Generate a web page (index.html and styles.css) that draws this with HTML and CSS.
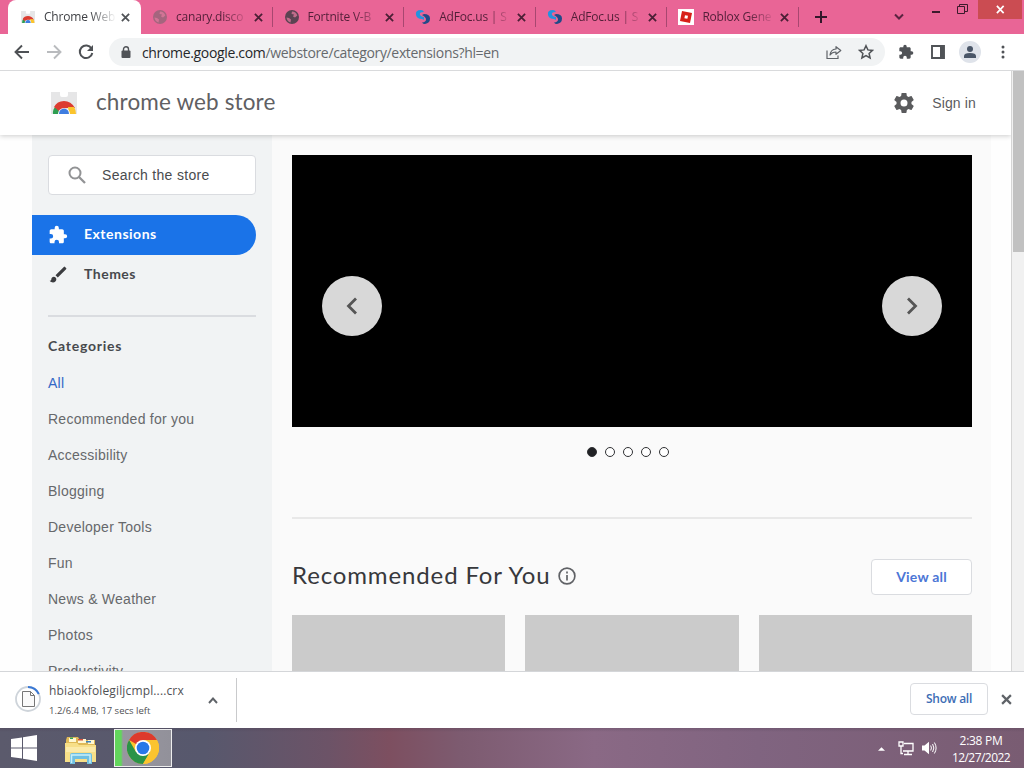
FILE: index.html
```html
<!DOCTYPE html>
<html lang="en">
<head>
<meta charset="utf-8">
<title>Chrome Web Store - Extensions</title>
<link rel="stylesheet" href="styles.css">
</head>
<body>
<svg class="defs" aria-hidden="true">
  <symbol id="x" viewBox="0 0 10 10"><path d="M1 1l8 8M9 1L1 9" fill="none" stroke="currentColor" stroke-width="2"/></symbol>
  <symbol id="globe" viewBox="0 0 14 14"><circle cx="7" cy="7" r="7" fill="currentColor"/><path d="M1.500 7.500L4 8l2 1.500-.5 3Q2 11.500 1.500 7.500zM7 1.500q4 0 5.300 4L10 7.500 8 6.500 9 4.500 6.500 4z" fill="#e07a9e" opacity=".75"/></symbol>
  <symbol id="adfocus" viewBox="0 0 16 16"><path d="M6 1Q0 1 1 6q1 4 6 4l2 1V8Q4 7 5 4q1-1 4-1Q8 1 6 1z" fill="#2493df"/><path d="M9 5q6 0 6 4.500Q15 14 10 15q-2 0-3-1.500 4-.5 4-3Q11 8 7 6z" fill="#214a88"/></symbol>
  <symbol id="store" viewBox="0 0 26 22"><path d="M0 0h9v3q0 2 2 2h4q2 0 2-2V0h9v22H0z" fill="#e6e6e7"/><path d="M2 22q-.5-5 3-8l5 8z" fill="#2f9e51"/><path d="M3 15Q6 9 13 9t11 7h-8l-8 3z" fill="#dc3c31"/><path d="M17 15h6q2 3 2 7h-7z" fill="#fbc42d"/><path d="M7 22a6 6 0 0 1 12 0z" fill="#fff"/><path d="M8 22a5 5.500 0 0 1 10 0z" fill="#3f7de0"/></symbol>
  <symbol id="puzzle" viewBox="0 0 24 24"><path fill="currentColor" d="M20.500 11H19V7c0-1.100-.9-2-2-2h-4V3.500a2.500 2.500 0 0 0-5 0V5H4c-1.100 0-2 .9-2 2v3.800h1.500a2.700 2.700 0 0 1 0 5.400H2V20c0 1.100.9 2 2 2h3.800v-1.500a2.700 2.700 0 0 1 5.400 0V22H17c1.100 0 2-.9 2-2v-4h1.500a2.500 2.500 0 0 0 0-5z"/></symbol>
</svg>

<header class="tabstrip">
  <div class="tabs">
    <div class="tab active"><svg class="fav"><use href="#store"/></svg><span class="title">Chrome Web</span><svg class="close"><use href="#x"/></svg></div>
    <div class="tab"><svg class="fav dim"><use href="#globe"/></svg><span class="title">canary.disco</span><svg class="close"><use href="#x"/></svg></div>
    <div class="tab"><svg class="fav dark"><use href="#globe"/></svg><span class="title">Fortnite V-B</span><svg class="close"><use href="#x"/></svg></div>
    <div class="tab"><svg class="fav big"><use href="#adfocus"/></svg><span class="title">AdFoc.us | S</span><svg class="close"><use href="#x"/></svg></div>
    <div class="tab"><svg class="fav big"><use href="#adfocus"/></svg><span class="title">AdFoc.us | S</span><svg class="close"><use href="#x"/></svg></div>
    <div class="tab"><svg class="fav big" viewBox="0 0 16 16"><path d="M0 0h16v16H0z" fill="#fff"/><path d="M4 2l10 2-2 10L2 12z" fill="#d71f18"/><path d="M7 6.200l3 .6-.6 3-3-.6z" fill="#fff"/></svg><span class="title">Roblox Gene</span><svg class="close"><use href="#x"/></svg></div>
  </div>
  <svg class="newtab" viewBox="0 0 12 12"><path d="M6 0v12M0 6h12" stroke="#33172a" stroke-width="2"/></svg>
  <div class="winctl">
    <svg class="chev" viewBox="0 0 10 6"><path d="M1 1l4 4 4-4" fill="none" stroke="#5a2440" stroke-width="2"/></svg>
    <span class="min"></span>
    <svg class="restore" viewBox="0 0 11 10"><path d="M.5 2.500h7v7h-7zM2.500 2.500v-2h8v7h-3" fill="none" stroke="#3c1a2c"/></svg>
    <span class="closewin"><svg viewBox="0 0 10 10"><path d="M1 1l7.500 8M8.500 1L1 9" stroke="#fff" stroke-width="1.900"/></svg></span>
  </div>
</header>

<nav class="toolbar">
  <svg class="nav" viewBox="0 0 16 16"><path d="M15 8H2M8 1.500L1.500 8 8 14.500" fill="none" stroke="#4e5155" stroke-width="1.900"/></svg>
  <svg class="nav" viewBox="0 0 16 16"><path d="M1 8h13M8 1.500L14.500 8 8 14.500" fill="none" stroke="#b9bbbe" stroke-width="1.900"/></svg>
  <svg class="nav" viewBox="0 0 16 16"><path d="M13.500 4.500A6.300 6.300 0 1 0 14.300 9" fill="none" stroke="#4e5155" stroke-width="2"/><path d="M15 1v6H9z" fill="#4e5155"/></svg>
  <div class="omnibox">
    <svg class="lock" viewBox="0 0 10 12"><path d="M2.500 5V3.300a2.500 2.500 0 0 1 5 0V5" fill="none" stroke="#505357" stroke-width="1.400"/><rect x=".5" y="4.500" width="9" height="7.500" rx="1" fill="#505357"/></svg>
    <span class="url"><b>chrome.google.com</b>/webstore/category/extensions?hl=en</span>
    <svg class="share" viewBox="0 0 16 14"><path d="M1 5v8h11v-3" fill="none" stroke="#5f6368" stroke-width="1.200"/><path d="M10 1.200L14.800 5 10 8.800V6.500Q6 6.500 4 9.500 4.500 4 10 3.500z" fill="none" stroke="#5f6368" stroke-width="1.200" stroke-linejoin="round"/></svg>
    <svg class="star" viewBox="0 0 16 16"><path d="M8 1.700l1.900 4.200 4.600.5-3.400 3 1 4.600L8 11.600 3.900 14l1-4.600-3.400-3 4.600-.5z" fill="none" stroke="#505357" stroke-width="1.500"/></svg>
  </div>
  <svg class="ext"><use href="#puzzle"/></svg>
  <svg class="side" viewBox="0 0 14 14"><path d="M1 1h12v12H1z" fill="none" stroke="#505357" stroke-width="1.900"/><path d="M9 1h4v12H9z" fill="#505357"/></svg>
  <span class="avatar"><svg viewBox="0 0 12 12"><circle cx="6" cy="3" r="3" fill="#4a5668"/><path d="M0 12V10q0-3 6-3t6 3v2z" fill="#4a5668"/></svg></span>
  <svg class="kebab" viewBox="0 0 4 14"><g fill="#505357"><circle cx="2" cy="2" r="1.500"/><circle cx="2" cy="7" r="1.500"/><circle cx="2" cy="12" r="1.500"/></g></svg>
</nav>

<div class="viewport">
  <div class="page">
    <header class="storehead">
      <svg class="logo"><use href="#store"/></svg>
      <h1>chrome web store</h1>
      <svg class="gear" viewBox="2 2 20 20"><path fill="#5a5b5d" d="M19.430 12.980c.04-.32.07-.64.07-.98s-.03-.66-.07-.98l2.110-1.650c.19-.15.24-.42.12-.64l-2-3.460c-.12-.22-.39-.3-.61-.22l-2.490 1c-.52-.4-1.080-.73-1.690-.98l-.38-2.650C14.460 2.180 14.250 2 14 2h-4c-.25 0-.46.18-.49.42l-.38 2.650c-.61.25-1.170.59-1.690.98l-2.490-1c-.23-.09-.49 0-.61.22l-2 3.460c-.13.22-.07.49.12.64l2.110 1.650c-.04.32-.07.65-.07.98s.03.66.07.98l-2.110 1.650c-.19.15-.24.42-.12.64l2 3.460c.12.22.39.3.61.22l2.490-1c.52.4 1.080.73 1.690.98l.38 2.650c.03.24.24.42.49.42h4c.25 0 .46-.18.49-.42l.38-2.650c.61-.25 1.170-.59 1.690-.98l2.490 1c.23.09.49 0 .61-.22l2-3.460c.12-.22.07-.49-.12-.64zM12 15.500a3.500 3.500 0 1 1 0-7 3.500 3.500 0 0 1 0 7z"/></svg>
      <a class="signin">Sign in</a>
    </header>
    <div class="content">
      <aside class="sidebar">
        <div class="search"><svg viewBox="0 0 18 18"><circle cx="7" cy="7" r="5.500" fill="none" stroke="#929395" stroke-width="2"/><path d="M11 11l6 6" stroke="#929395" stroke-width="2.300"/></svg><span>Search the store</span></div>
        <div class="navitem on"><svg><use href="#puzzle"/></svg><span>Extensions</span></div>
        <div class="navitem"><svg viewBox="0 0 24 24"><path fill="#3b3c3f" d="M7 14c-1.660 0-3 1.340-3 3 0 1.310-1.160 2-2 2 .92 1.220 2.490 2 4 2 2.210 0 4-1.790 4-4 0-1.660-1.340-3-3-3zm14.700-10.400l-1.300-1.300a1 1 0 0 0-1.410 0L9 12.250 11.750 15l9.950-9.950a1 1 0 0 0 0-1.450z"/></svg><span>Themes</span></div>
        <hr>
        <h2>Categories</h2>
        <ul>
          <li class="sel">All</li><li>Recommended for you</li><li>Accessibility</li><li>Blogging</li><li>Developer Tools</li><li>Fun</li><li>News &amp; Weather</li><li>Photos</li><li>Productivity</li>
        </ul>
      </aside>
      <main class="main">
        <section class="carousel">
          <span class="arrow"><svg viewBox="0 0 12 18"><path d="M10 1.500L2.500 9l7.500 7.500" fill="none" stroke="#555" stroke-width="2.800"/></svg></span>
          <span class="arrow"><svg viewBox="0 0 12 18"><path d="M2 1.500L9.500 9 2 16.500" fill="none" stroke="#555" stroke-width="2.800"/></svg></span>
        </section>
        <div class="dots"><i class="full"></i><i></i><i></i><i></i><i></i></div>
        <hr>
        <div class="sectionhead"><h2>Recommended For You</h2><svg viewBox="0 0 16 16"><circle cx="8" cy="8" r="7" fill="none" stroke="#606266" stroke-width="1.500"/><path d="M8 7v5M8 4v1.700" stroke="#606266" stroke-width="1.500"/></svg><a class="viewall">View all</a></div>
        <div class="cards"><div></div><div></div><div></div></div>
      </main>
    </div>
  </div>
  <div class="scrollbar"><div class="thumb"></div></div>
</div>

<div class="shelf">
  <svg class="dl" viewBox="0 0 28 28"><circle cx="14" cy="14" r="12" fill="none" stroke="#ced4da" stroke-width="1.800"/><path d="M14 2a12 12 0 0 1 10.800 7" fill="none" stroke="#3978d5" stroke-width="2"/><path d="M8.500 6.500h8l4 4v11h-12z" fill="#fafafa" stroke="#777"/><path d="M16.500 6.500v4h4" fill="none" stroke="#777"/></svg>
  <div class="file"><span class="fname">hbiaokfolegiljcmpl....crx</span><span class="fstat">1.2/6.4 MB, 17 secs left</span></div>
  <svg class="up" viewBox="0 0 10 7"><path d="M1 6l4-4.500L9 6" fill="none" stroke="#5f6368" stroke-width="1.900"/></svg>
  <span class="rule"></span>
  <a class="showall">Show all</a>
  <svg class="shelfx"><use href="#x"/></svg>
</div>

<footer class="taskbar">
  <svg class="win" viewBox="0 0 26 26"><path fill="#fff" d="M0 4l11-1.500v10H0zM12 2.300L26 0v12.500H12zM0 13.500h11v10L0 22zM12 13.500h14V26l-14-2.200z"/></svg>
  <svg class="folder" viewBox="0 0 34 30"><path d="M3 2h11l2 3h15v22H2V5z" fill="#dfb957"/><path d="M5 3h7v4H5zM14 4h8v4h-8zM24 5h6v4h-6z" fill="#fff8d2"/><path d="M6 2.500h3v1.500H6z" fill="#35a35b"/><path d="M14 4h5v1.500h-5z" fill="#d75039"/><path d="M22 6h5v1.500h-5z" fill="#3c83bf"/><path d="M1 8h12l2 2h17v17H1z" fill="#f7df88"/><path d="M2 12h29v5H2z" fill="#fbeaa9"/><path d="M6 29V20q0-2 2-2h18q2 0 2 2v9h-5v-5H11v5H6z" fill="#6fc0e2"/><path d="M7.500 28v-8h18.500v8" fill="none" stroke="#c7effb" stroke-width="1.500"/></svg>
  <div class="task"><svg viewBox="0 0 32 32"><circle cx="16" cy="16" r="16" fill="#fbc42f"/><path d="M16 16L2.100 8A16 16 0 0 1 29.900 8H16z" fill="#dd3a2d"/><path d="M2.100 8a16 16 0 0 0 13.900 24l7-12-7-4-7 4z" fill="#2a9347"/><path d="M16 8h13.900A16 16 0 0 1 16 32l7-12z" fill="#fbc42f"/><circle cx="16" cy="16" r="8" fill="#fff"/><circle cx="16" cy="16" r="6.300" fill="#2878e8"/></svg></div>
  <div class="tray">
    <svg class="tri" viewBox="0 0 8 4"><path d="M4 0l4 4H0z" fill="#fff"/></svg>
    <svg class="net" viewBox="0 0 16 15"><g fill="none" stroke="#fff" stroke-width="1.300"><path d="M6 2.500h9v7.500H5M10 10v3M6 13.500h8M1 1h4v4H1zM3 5v7.500h2"/></g></svg>
    <svg class="vol" viewBox="0 0 16 14"><path d="M1 4.500h2.500L8 .8v12.400L3.500 9.500H1z" fill="#fff"/><path d="M9.700 4.500q1.500 2.500 0 5M11.600 3q2.500 4 0 8M13.400 1.500q3.400 5.500 0 11" fill="none" stroke="#fff"/></svg>
    <div class="clock"><span class="time">2:38 PM</span><span class="date">12/27/2022</span></div>
  </div>
</footer>
</body>
</html>
```
FILE: styles.css
```css
* { box-sizing: border-box; }
body { margin: 0; width: 1024px; height: 768px; overflow: hidden; display: flex; flex-direction: column; background: #fff; font-family: "Open Sans", "Noto Sans", sans-serif; }
svg { display: block; flex: none; }
.defs { position: absolute; width: 0; height: 0; }
h1, h2, ul, hr { margin: 0; padding: 0; border: 0; font-weight: 400; }

.tabstrip { flex: 0 0 34px; display: flex; background: #e96596; padding-left: 8px; }
.tabs { display: flex; width: 791px; }
.tab { flex: 1 1 0; min-width: 0; display: flex; align-items: center; padding: 0 10px 0 12px; color: #521f38; background: linear-gradient(#a84770, #a84770) right 7px / 1px 20px no-repeat; }
.tab.active { background: #fff; border-radius: 8px 8px 0 0; color: #3f4145; flex: 0 0 133px; padding: 0 11px 0 13px; }
.tab .fav { width: 14px; height: 14px; margin: 0 9px 0 0; }
.tab .fav.big { width: 16px; height: 16px; margin: 0 8px 0 -1px; }
.fav.dim { color: #a5657e; }
.fav.dark { color: #5b4352; }
.title { flex: 1; min-width: 0; white-space: nowrap; font-size: 12px; line-height: 18px; letter-spacing: -.2px; -webkit-mask-image: linear-gradient(90deg, #000 65%, transparent 102%); mask-image: linear-gradient(90deg, #000 65%, transparent 102%); }
.close { width: 9px; height: 9px; margin-left: 6px; color: #4b1f35; }
.active .close { color: #505357; }
.newtab { width: 12px; height: 12px; margin: 11px 0 0 16px; }
.winctl { margin-left: auto; display: flex; align-items: flex-start; }
.chev { width: 10px; height: 7px; margin: 13px 33px 0 0; }
.min { width: 8px; height: 2px; background: #3c1a2c; margin: 11px 17px 0 -5px; }
.restore { width: 11px; height: 10px; margin: 4px 10px 0 0; }
.closewin { width: 44px; height: 19px; background: #cb4c52; margin-right: 2px; display: grid; place-items: center; }
.closewin svg { width: 9px; height: 9px; }

.toolbar { flex: 0 0 37px; display: flex; align-items: center; padding: 0 19px 0 14px; border-bottom: 1px solid #d9dadc; background: #fff; }
.nav { width: 16px; height: 16px; margin-right: 16px; }
.omnibox { width: 776px; height: 28px; border-radius: 14px; background: #f1f3f4; margin-left: -1px; display: flex; align-items: center; padding: 0 11px 0 12px; }
.lock { width: 10px; height: 12px; }
.url { margin-left: 11px; font-size: 14px; letter-spacing: -.34px; color: #66696d; white-space: nowrap; }
.url b { font-weight: 400; color: #25272a; }
.share { width: 16px; height: 15px; margin-left: auto; }
.star { width: 16px; height: 16px; margin: 0 0 0 16px; }
.ext { width: 16px; height: 16px; color: #505357; margin-left: 13px; }
.side { width: 14px; height: 14px; margin-left: 17px; }
.avatar { width: 22px; height: 22px; border-radius: 50%; background: #dfe3ea; display: grid; place-items: center; margin-left: 14px; }
.avatar svg { width: 12px; height: 12px; }
.kebab { width: 4px; height: 14px; margin-left: auto; }

.viewport { flex: 0 0 600px; display: flex; overflow: hidden; }
.page { width: 1011px; overflow: hidden; background: #fefefe; }
.storehead { height: 64px; background: #fff; display: flex; align-items: center; padding: 0 35px 0 51px; box-shadow: 0 1px 5px rgba(0,0,0,.2); position: relative; }
.logo { width: 26px; height: 22px; }
.storehead h1 { margin: 0 0 2px 19px; font: 22.500px/28px Lato, sans-serif; color: #5f6063; letter-spacing: .13px; white-space: nowrap; }
.gear { width: 20px; height: 20px; margin-left: auto; }
.signin { margin-left: 18px; font: 14px/20px "Liberation Sans", sans-serif; letter-spacing: .15px; color: #5a5b5e; }
.content { display: flex; margin: 0 20px 0 32px; height: 536px; background: #fafafa; }
.sidebar { width: 240px; background: #f1f3f4; padding: 20px 16px 0 0; overflow: hidden; }
.search { margin-left: 16px; height: 40px; border: 1px solid #dadce0; border-radius: 4px; background: #fff; display: flex; align-items: center; padding-left: 19px; font: 14px/20px "Liberation Sans", sans-serif; letter-spacing: .3px; color: #4a4b4e; margin-bottom: 20px; }
.search svg { width: 18px; height: 18px; margin-right: 16px; }
.navitem { height: 40px; border-radius: 0 20px 20px 0; display: flex; align-items: center; padding-left: 16px; font: 700 14px/20px Lato, sans-serif; letter-spacing: .5px; color: #47494d; }
.navitem svg { width: 20px; height: 20px; margin-right: 16px; }
.navitem span { padding-bottom: 2px; }
.navitem:not(.on) svg { width: 20px; height: 20px; }
.navitem.on { background: #1a73e8; color: #fff; }
.sidebar hr { height: 2px; background: #dadce0; margin: 20px 0 0 16px; }
.sidebar h2 { margin: 19px 0 9px 16px; font: 700 14px/20px Lato, sans-serif; letter-spacing: .75px; color: #47494d; }
.sidebar ul { list-style: none; margin-left: 16px; font: 14px/36px "Liberation Sans", sans-serif; letter-spacing: .25px; color: #66686b; }
.sidebar li { height: 36px; }
.sel { color: #3367c6; }
.main { width: 700px; padding: 20px 0 0 20px; }
.carousel { height: 272px; width: 680px; background: #000; display: flex; justify-content: space-between; align-items: center; padding: 30px 30px 0; }
.arrow { width: 60px; height: 60px; border-radius: 50%; background: #d8d8d8; display: grid; place-items: center; }
.arrow svg { width: 12px; height: 18px; }
.dots { display: flex; justify-content: center; gap: 8px; margin-top: 20px; width: 672px; }
.dots i { width: 10px; height: 10px; border: 1px solid #303134; border-radius: 50%; background: #fff; }
.dots .full { background: #202124; }
.main hr { width: 680px; height: 2px; background: #e8e8e8; margin-top: 60px; }
.sectionhead { display: flex; align-items: center; width: 680px; height: 36px; margin: 40px 0 20px; }
.sectionhead h2 { font: 24px/32px Lato, sans-serif; letter-spacing: .87px; padding-bottom: 4px; color: #37383c; white-space: nowrap; }
.sectionhead svg { width: 18px; height: 18px; margin: -3px 0 0 8px; }
.viewall { margin-left: auto; width: 101px; height: 36px; border: 1px solid #dadce0; border-radius: 4px; background: #fff; text-align: center; font: 700 14px/34px Lato, sans-serif; letter-spacing: .2px; color: #4c76d6; }
.cards { display: grid; grid-template-columns: repeat(3, 1fr); gap: 20px; width: 680px; height: 60px; }
.cards div { background: #cbcbcb; }
.scrollbar { width: 13px; background: #f1f1f1; border-left: 1px solid #d5d5d5; }
.thumb { height: 181px; width: 11px; margin-left: 1px; background: #c1c1c1; }

.shelf { flex: 0 0 57px; display: flex; align-items: center; border-top: 1px solid #d4d6d9; padding: 0 12px 0 14px; background: #fff; }
.dl { width: 28px; height: 28px; margin-top: -2px; }
.file { margin: 0 0 0 7px; width: 142px; display: flex; flex-direction: column; gap: 3px; white-space: nowrap; }
.fname { font-size: 12px; line-height: 18px; letter-spacing: .14px; color: #505155; }
.fstat { font-size: 9.500px; line-height: 16px; color: #4f5054; }
.up { width: 10px; height: 7px; margin-left: 17px; }
.rule { width: 1px; height: 44px; background: #c9cacc; margin-left: 18px; }
.showall { width: 78px; height: 32px; border: 1px solid #dadce0; border-radius: 4px; margin: -2px 0 0 auto; text-align: center; font: 600 12px/30px "Open Sans", sans-serif; letter-spacing: -.25px; color: #3d6db5; }
.shelfx { width: 11px; height: 11px; margin: -2px 0 0 13px; color: #5f6368; }

.taskbar { flex: 0 0 40px; display: flex; align-items: center; padding-left: 11px; color: #fff; background: linear-gradient(rgba(70,55,75,.25), transparent 4px), linear-gradient(90deg, #5b5a6c 0, #57586d 20%, #6c5367 32%, #7d4f60 38%, #7d5b70 45%, #8a6985 58%, #806480 74%, #795c72 100%); }
.win { width: 26px; height: 26px; }
.folder { width: 34px; height: 30px; margin: 3px 0 0 27px; }
.task { width: 58px; height: 38px; margin-left: 16px; border: 1px solid #eee; background: linear-gradient(90deg, #62d65c 0 6px, #9896a0 8px, #92919a); display: grid; place-items: center; }
.task svg { width: 32px; height: 32px; }
.tray { margin-left: auto; display: flex; align-items: center; padding-right: 13px; }
.tri { width: 7px; height: 4px; margin-top: 2px; }
.net { width: 16px; height: 15px; margin-left: 13px; }
.vol { width: 16px; height: 14px; margin-left: 7px; }
.clock { width: 60px; margin: 1px 0 0 14px; display: flex; flex-direction: column; align-items: center; font-size: 12px; line-height: 17px; white-space: nowrap; }
.time { letter-spacing: -.3px; }
.date { letter-spacing: -.55px; }
```
